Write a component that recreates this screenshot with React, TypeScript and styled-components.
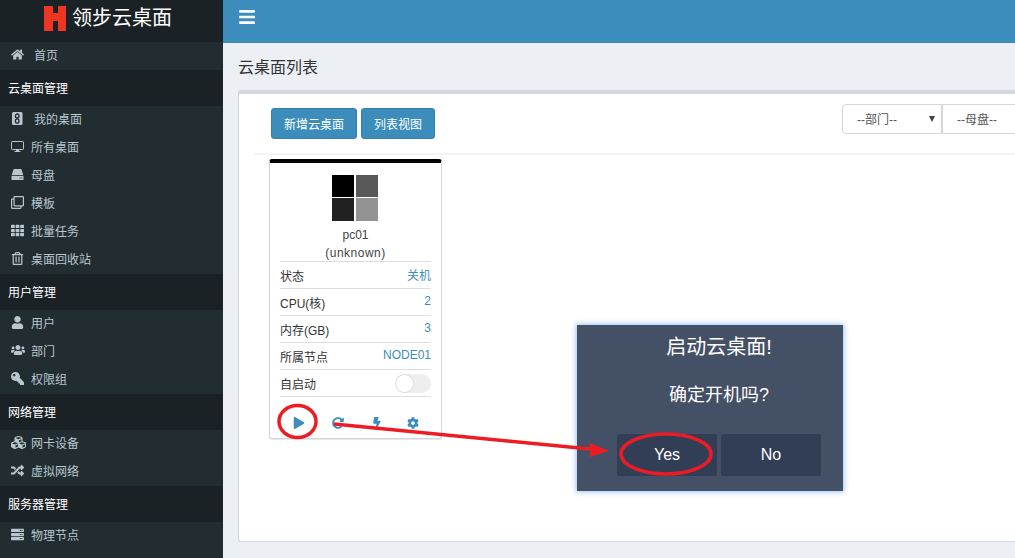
import React from "react";
import styled, { createGlobalStyle } from "styled-components";
import { FaHome, FaRegClone, FaTh, FaRegTrashAlt, FaUser, FaUsers, FaKey, FaCubes, FaRandom, FaServer, FaBars, FaPlay, FaRedoAlt, FaBolt, FaCog } from "react-icons/fa";

const Global = createGlobalStyle`
  html, body { margin: 0; padding: 0; height: 558px; overflow: hidden; background: #ecf0f5; }
  * { box-sizing: border-box; }
  body { font-family: "Liberation Sans", "Noto Sans CJK SC", sans-serif; font-size: 12px; color: #333; }
`;

const Page = styled.div`
  position: relative;
  display: flex;
  width: 1015px;
  height: 558px;
  overflow: hidden;
`;
const Sidebar = styled.aside`
  width: 223px;
  flex: none;
  background: #222d32;
  display: flex;
  flex-direction: column;
`;
const Brand = styled.div`
  height: 42px;
  background: #1a2226;
  display: flex;
  align-items: center;
  padding: 0 0 6px 44px;
  gap: 6px;
  color: #fff;
  font-size: 20px;
  span { margin-bottom: 4px; }
`;
const SectionTitle = styled.div`
  height: 36px;
  background: #1a2226;
  color: #fff;
  padding-left: 8px;
  display: flex;
  align-items: center;
  padding-bottom: 2px;
  font-size: 12px;
`;
const NavItem = styled.div<{ $gap?: number }>`
  height: 28px;
  display: flex;
  align-items: center;
  padding: 0 0 4px 11px;
  color: #b8c7ce;
  font-size: 12px;
  svg { flex: none; width: 13px; height: 13px; margin-right: ${(p) => p.$gap ?? 7}px; }
`;
const KeyIcon = styled(FaKey)`
  transform: scaleX(-1);
`;
const UsersIcon = styled(FaUsers)`
  && { width: 14px; height: 14px; margin-right: 6px; }
`;
const CubesIcon = styled(FaCubes)`
  && { width: 15px; height: 15px; margin-right: 5px; }
`;
const Main = styled.main`
  flex: 1;
  min-width: 0;
  display: flex;
  flex-direction: column;
`;
const TopBar = styled.header`
  height: 43px;
  flex: none;
  background: #3c8dbc;
  color: #fff;
  padding: 8px 0 0 15px;
  svg { display: block; width: 18px; height: 18px; }
`;
const Title = styled.h1`
  margin: 0;
  padding: 14px 0 0 15px;
  height: 47px;
  font-size: 16px;
  line-height: 22px;
  font-weight: 400;
  color: #333;
`;
const Panel = styled.section`
  margin-left: 15px;
  width: 777px;
  height: 452px;
  background: #fff;
  border-top: 4px solid #d2d6de;
  border-left: 1px solid #d2d6de;
  border-bottom: 1px solid #d2d6de;
  border-radius: 3px 0 0 3px;
  padding-left: 15px;
`;
const Toolbar = styled.div`
  height: 61px;
  border-bottom: 2px solid #f4f4f4;
  display: flex;
  justify-content: space-between;
  padding: 14px 0 0 17px;
`;
const Buttons = styled.div`
  display: flex;
  gap: 4px;
`;
const Button = styled.div<{ $w: number }>`
  width: ${(p) => p.$w}px;
  height: 31px;
  background: #3c8dbc;
  border: 1px solid #367fa9;
  border-radius: 3px;
  color: #fff;
  font-size: 12px;
  display: flex;
  align-items: center;
  justify-content: center;
`;
const Filters = styled.div`
  display: flex;
  margin-top: -4px;
  height: 30px;
`;
const Select = styled.div<{ $w: number; $first?: boolean }>`
  position: relative;
  width: ${(p) => p.$w}px;
  height: 30px;
  border: 1px solid #d2d6de;
  border-right: ${(p) => (p.$first ? "1px solid #d2d6de" : "0")};
  border-radius: ${(p) => (p.$first ? "4px 0 0 4px" : "0")};
  padding: 7px 0 0 14px;
  font-size: 12px;
  line-height: 16px;
  color: #555;
`;
const Caret = styled.span`
  position: absolute;
  right: 6px;
  top: 11px;
  width: 0;
  height: 0;
  border-left: 3.5px solid transparent;
  border-right: 3.5px solid transparent;
  border-top: 6px solid #444;
`;
const Grid = styled.div`
  padding: 4px 0 0 15px;
`;
const Card = styled.article`
  width: 173px;
  height: 280px;
  background: #fff;
  border-top: 4px solid #000;
  border-left: 1px solid #d2d6de;
  border-right: 1px solid #d2d6de;
  border-bottom: 1px solid #d2d6de;
  border-radius: 3px;
  box-shadow: 0 1px 1px rgba(0, 0, 0, 0.1);
  padding: 12px 10px 0;
`;
const Tiles = styled.div`
  display: grid;
  grid-template-columns: 22px 22px;
  grid-template-rows: 22px 23px;
  gap: 1px 2px;
  width: 46px;
  margin-left: 52px;
`;
const Tile = styled.span<{ $c: string }>`
  background: ${(p) => p.$c};
`;
const CardName = styled.div`
  margin-top: 5px;
  height: 35px;
  text-align: center;
  line-height: 18px;
  font-size: 12px;
  color: #444;
`;
const CardStatus = styled.span`
  letter-spacing: 0.5px;
`;
const Row = styled.div`
  height: 27px;
  border-top: 1px solid #ddd;
  display: flex;
  justify-content: space-between;
  align-items: center;
  font-size: 12px;
  color: #333;
`;
const Value = styled.span`
  color: #3c8dbc;
  padding-bottom: 2px;
`;
const Toggle = styled.span`
  position: relative;
  width: 36px;
  height: 19px;
  border-radius: 10px;
  background: #eee;
`;
const Knob = styled.span`
  position: absolute;
  left: 0;
  top: 0;
  width: 19px;
  height: 19px;
  border-radius: 50%;
  background: #fff;
  border: 1px solid #ddd;
`;
const Actions = styled.div`
  border-top: 1px solid #ddd;
  height: 43px;
  display: grid;
  grid-template-columns: 38px 40px 38px 34px;
  justify-items: center;
  align-items: center;
  color: #3c8dbc;
  padding-top: 10px;
  svg { width: 12px; height: 12px; }
`;
const Dialog = styled.div`
  position: absolute;
  left: 577px;
  top: 325px;
  width: 266px;
  height: 166px;
  padding-left: 18px;
  background: #445066;
  box-shadow: 0 0 5px 1px rgba(120, 175, 245, 0.75);
  color: #fff;
  text-align: center;
`;
const DialogTitle = styled.div`
  margin-top: 9px;
  font-size: 20px;
  line-height: 26px;
`;
const DialogText = styled.div`
  margin-top: 23px;
  font-size: 18px;
  line-height: 24px;
`;
const DialogButtons = styled.div`
  margin-top: 27px;
  display: flex;
  justify-content: center;
  gap: 4px;
`;
const DialogButton = styled.div`
  width: 100px;
  height: 42px;
  background: #323e55;
  border-radius: 2px;
  font-size: 16px;
  display: flex;
  align-items: center;
  justify-content: center;
`;
const Annotation = styled.svg`
  position: absolute;
  left: 0;
  top: 0;
  pointer-events: none;
`;

const MyDesk = () => (
  <svg viewBox="0 0 13 13">
    <rect x="1" y="0" width="10.500" height="13" rx="1.500" fill="#b8c7ce" />
    <ellipse cx="6.200" cy="4" rx="1.800" ry="2" fill="none" stroke="#222d32" strokeWidth="1.300" />
    <ellipse cx="6.200" cy="9" rx="1.800" ry="2.200" fill="none" stroke="#222d32" strokeWidth="1.300" />
  </svg>
);
const MonitorIcon = () => (
  <svg viewBox="0 0 13 13" fill="none">
    <rect x="0.500" y="1.500" width="12" height="8" rx="0.800" stroke="#b8c7ce" strokeWidth="1" />
    <path d="M5 9.500h3v1.500h1.500v1H3.500v-1H5z" fill="#b8c7ce" />
  </svg>
);
const DiskIcon = () => (
  <svg viewBox="0 0 13 13">
    <path d="M2.700 1h7.600l2 6H0.700z" fill="#b8c7ce" />
    <path d="M0.500 7.800h12V12H0.500z" fill="#b8c7ce" />
    <path d="M8.500 10h1M10.500 10h1" stroke="#222d32" strokeWidth="1" />
  </svg>
);
const Logo = () => (
  <svg width="22" height="25" viewBox="0 0 22 25">
    <path d="M0 0h9v7h5V0h8v25h-8V15H9v10H0z" fill="#ee3524" />
  </svg>
);

type Nav = { icon: React.ReactNode; label: string; gap?: number };
const groups: { title: string; items: Nav[] }[] = [
  {
    title: "云桌面管理",
    items: [
      { icon: <MyDesk />, label: "我的桌面", gap: 10 },
      { icon: <MonitorIcon />, label: "所有桌面" },
      { icon: <DiskIcon />, label: "母盘" },
      { icon: <FaRegClone />, label: "模板" },
      { icon: <FaTh />, label: "批量任务" },
      { icon: <FaRegTrashAlt />, label: "桌面回收站" },
    ],
  },
  {
    title: "用户管理",
    items: [
      { icon: <FaUser />, label: "用户" },
      { icon: <UsersIcon />, label: "部门" },
      { icon: <KeyIcon />, label: "权限组" },
    ],
  },
  {
    title: "网络管理",
    items: [
      { icon: <CubesIcon />, label: "网卡设备" },
      { icon: <FaRandom />, label: "虚拟网络" },
    ],
  },
  { title: "服务器管理", items: [{ icon: <FaServer />, label: "物理节点" }] },
];

const rows = [
  ["状态", "关机"],
  ["CPU(核)", "2"],
  ["内存(GB)", "3"],
  ["所属节点", "NODE01"],
];

export default function App() {
  return (
    <Page>
      <Global />
      <Sidebar>
        <Brand>
          <Logo />
          <span>领步云桌面</span>
        </Brand>
        <NavItem $gap={10}>
          <FaHome />
          <span>首页</span>
        </NavItem>
        {groups.map((g) => (
          <React.Fragment key={g.title}>
            <SectionTitle>{g.title}</SectionTitle>
            {g.items.map((i) => (
              <NavItem key={i.label} $gap={i.gap}>
                {i.icon}
                <span>{i.label}</span>
              </NavItem>
            ))}
          </React.Fragment>
        ))}
      </Sidebar>
      <Main>
        <TopBar>
          <FaBars />
        </TopBar>
        <Title>云桌面列表</Title>
        <Panel>
          <Toolbar>
            <Buttons>
              <Button $w={86}>新增云桌面</Button>
              <Button $w={74}>列表视图</Button>
            </Buttons>
            <Filters>
              <Select $w={100} $first>
                --部门--
                <Caret />
              </Select>
              <Select $w={73}>--母盘--</Select>
            </Filters>
          </Toolbar>
          <Grid>
            <Card>
              <Tiles>
                <Tile $c="#000" />
                <Tile $c="#595959" />
                <Tile $c="#212121" />
                <Tile $c="#939393" />
              </Tiles>
              <CardName>
                pc01
                <br />
                <CardStatus>(unknown)</CardStatus>
              </CardName>
              {rows.map(([k, v]) => (
                <Row key={k}>
                  <span>{k}</span>
                  <Value>{v}</Value>
                </Row>
              ))}
              <Row>
                <span>自启动</span>
                <Toggle>
                  <Knob />
                </Toggle>
              </Row>
              <Actions>
                <FaPlay />
                <FaRedoAlt />
                <FaBolt />
                <FaCog />
              </Actions>
            </Card>
          </Grid>
        </Panel>
      </Main>
      <Dialog>
        <DialogTitle>启动云桌面!</DialogTitle>
        <DialogText>确定开机吗?</DialogText>
        <DialogButtons>
          <DialogButton>Yes</DialogButton>
          <DialogButton>No</DialogButton>
        </DialogButtons>
      </Dialog>
      <Annotation width="1015" height="558" viewBox="0 0 1015 558">
        <ellipse cx="297.500" cy="421.500" rx="18.500" ry="16" fill="none" stroke="#ed1c24" strokeWidth="3.500" />
        <ellipse cx="666" cy="454" rx="45" ry="20" fill="none" stroke="#ed1c24" strokeWidth="3.500" />
        <path d="M334 424L595 449.500" stroke="#ed1c24" strokeWidth="3.500" />
        <path d="M609 451L589 442.500L591 449.500L589 457z" fill="#ed1c24" />
      </Annotation>
    </Page>
  );
}
